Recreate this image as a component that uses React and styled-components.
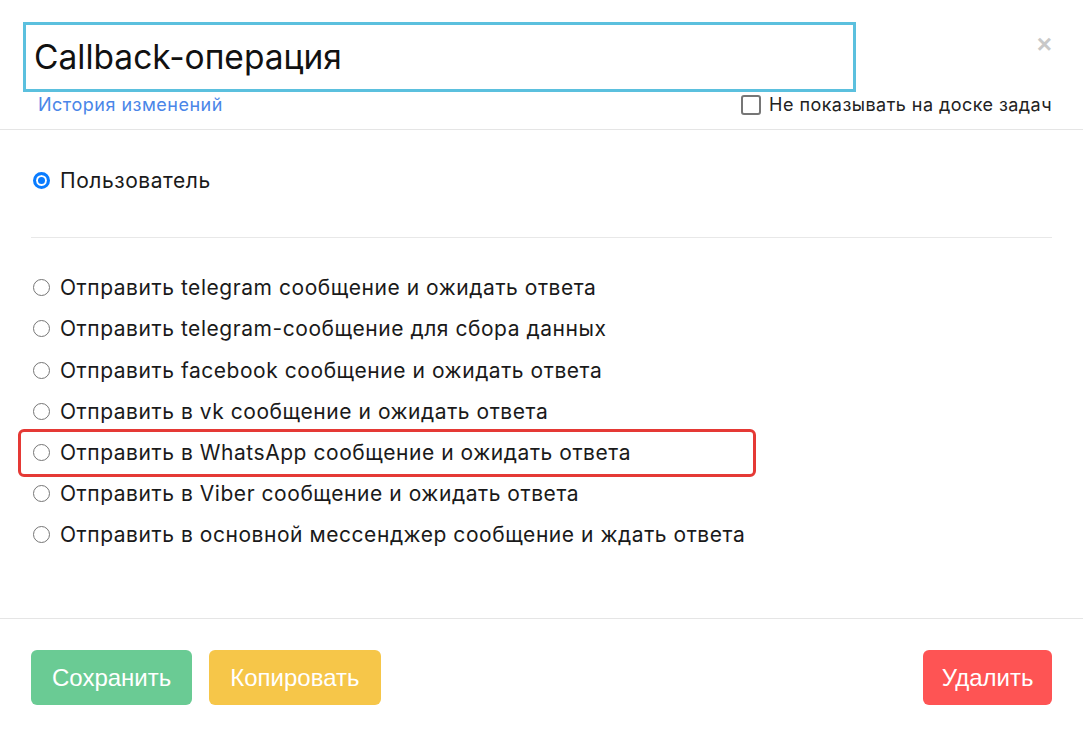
import React, { useState } from "react";
import styled, { createGlobalStyle } from "styled-components";

const GlobalStyle = createGlobalStyle`
  html, body {
    margin: 0;
    padding: 0;
    background: #ffffff;
    font-family: Inter, "Noto Sans", sans-serif;
    color: #1a1a1a;
  }
`;

const Modal = styled.div`
  width: 1083px;
  height: 735px;
  display: flex;
  flex-direction: column;
  background: #fff;
`;

const Header = styled.div`
  padding: 22px 31px 0 23px;
  border-bottom: 1px solid #e5e5e5;
  height: 130px;
  box-sizing: border-box;
`;

const TitleRow = styled.div`
  display: flex;
  align-items: flex-start;
  justify-content: space-between;
`;

const TitleInput = styled.input`
  width: 833px;
  height: 70px;
  box-sizing: border-box;
  border: 3px solid #5bc0de;
  padding: 0 8px;
  font-family: inherit;
  font-size: 33.5px;
  color: #111;
  outline: none;
`;

const Close = styled.button`
  border: none;
  background: none;
  color: #c8c8c8;
  font-size: 26px;
  font-weight: 700;
  line-height: 1;
  padding: 0;
  margin-top: 9px;
  cursor: pointer;
  font-family: "Liberation Sans", sans-serif;
`;

const SubRow = styled.div`
  display: flex;
  justify-content: space-between;
  align-items: center;
  padding-left: 15px;
  margin-top: 2px;
`;

const HistoryLink = styled.a`
  color: #4a86e8;
  font-size: 18px;
  letter-spacing: 0.5px;
  text-decoration: none;
  cursor: pointer;
`;

const CheckLabel = styled.label`
  display: flex;
  align-items: center;
  gap: 8px;
  font-size: 18px;
  letter-spacing: 0.45px;
  color: #222;
`;

const Checkbox = styled.span`
  width: 16px;
  height: 16px;
  border: 2px solid #767676;
  border-radius: 3px;
  box-sizing: content-box;
`;

const Body = styled.div`
  flex: 1;
  padding: 0 31px;
  border-bottom: 1px solid #e5e5e5;
`;

const TopGroup = styled.div`
  padding: 30px 0 36px;
  border-bottom: 1px solid #e8e8e8;
`;

const List = styled.div`
  display: flex;
  flex-direction: column;
  padding-top: 29px;
`;

const Option = styled.label`
  position: relative;
  display: flex;
  align-items: center;
  gap: 10px;
  height: 41.2px;
  padding-left: 2px;
  font-size: 21px;
  letter-spacing: 0.55px;
  color: #1a1a1a;
  cursor: pointer;
  white-space: nowrap;
`;

const Highlight = styled.span`
  position: absolute;
  left: -13px;
  top: -3.4px;
  width: 738px;
  height: 48px;
  box-sizing: border-box;
  border: 3px solid #e53935;
  border-radius: 6px;
  pointer-events: none;
`;

const Radio = styled.span`
  border-radius: 50%;
  flex-shrink: 0;
  box-sizing: border-box;
  background: #fff;
  border: ${(p) => (p.checked ? "3px solid #0a7cff" : "1.5px solid #767676")};
  box-shadow: ${(p) => (p.checked ? "inset 0 0 0 2px #fff, inset 0 0 0 8px #0a7cff" : "none")};
  width: 17px;
  height: 17px;
`;

const Footer = styled.div`
  display: flex;
  align-items: center;
  padding: 31px 31px 30px;
  gap: 17px;
`;

const Button = styled.button`
  height: 55px;
  padding: 0 ${(p) => p.pad}px;
  border: none;
  border-radius: 6px;
  background: ${(p) => p.color};
  color: #fff;
  font-family: "Liberation Sans", Arial, sans-serif;
  font-size: 24px;
  cursor: pointer;
  margin-left: ${(p) => (p.right ? "auto" : "0")};
`;

const options = [
  "Отправить telegram сообщение и ожидать ответа",
  "Отправить telegram-сообщение для сбора данных",
  "Отправить facebook сообщение и ожидать ответа",
  "Отправить в vk сообщение и ожидать ответа",
  "Отправить в WhatsApp сообщение и ожидать ответа",
  "Отправить в Viber сообщение и ожидать ответа",
  "Отправить в основной мессенджер сообщение и ждать ответа",
];

export default function App() {
  const [selected, setSelected] = useState(-1);

  return (
    <Modal>
      <GlobalStyle />
      <Header>
        <TitleRow>
          <TitleInput defaultValue="Callback-операция" />
          <Close>×</Close>
        </TitleRow>
        <SubRow>
          <HistoryLink>История изменений</HistoryLink>
          <CheckLabel>
            <Checkbox />
            Не показывать на доске задач
          </CheckLabel>
        </SubRow>
      </Header>
      <Body>
        <TopGroup>
          <Option onClick={() => setSelected(-1)}>
            <Radio checked={selected === -1} />
            Пользователь
          </Option>
        </TopGroup>
        <List>
          {options.map((text, i) => (
            <Option key={text} onClick={() => setSelected(i)}>
              {i === 4 && <Highlight />}
              <Radio checked={selected === i} />
              {text}
            </Option>
          ))}
        </List>
      </Body>
      <Footer>
        <Button color="#6acb94" pad={21}>Сохранить</Button>
        <Button color="#f6c649" pad={21}>Копировать</Button>
        <Button color="#fe5454" pad={18.5} right>
          Удалить
        </Button>
      </Footer>
    </Modal>
  );
}
